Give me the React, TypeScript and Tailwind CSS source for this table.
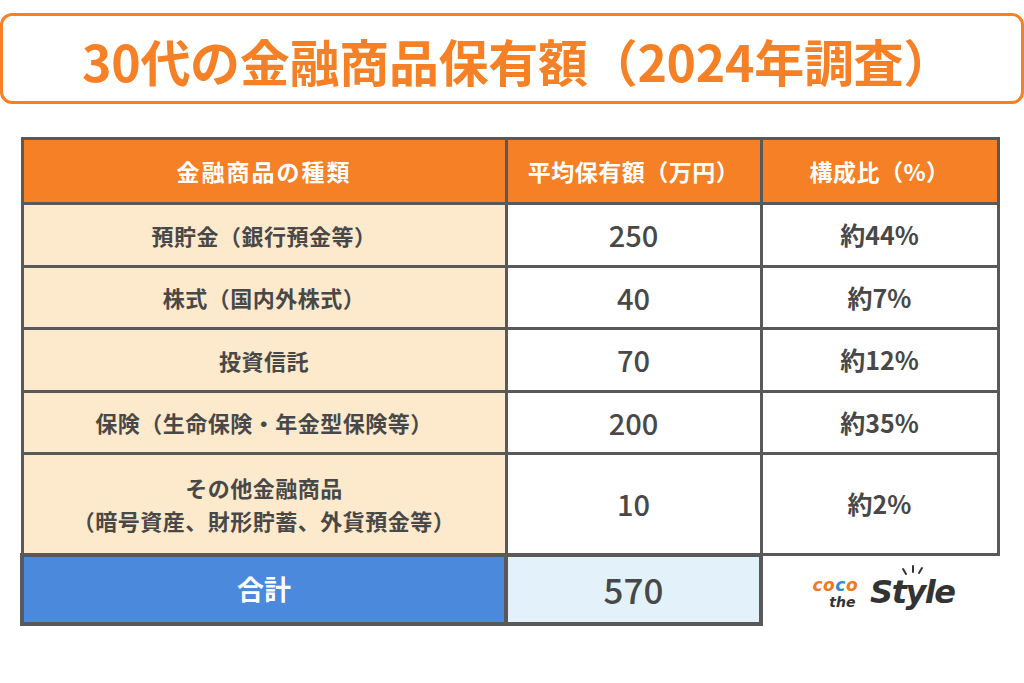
const rows = [
  { name: ["預貯金（銀行預金等）"], amount: "250", ratio: "約44%", h: "h-[63px]" },
  { name: ["株式（国内外株式）"], amount: "40", ratio: "約7%", h: "h-[62px]" },
  { name: ["投資信託"], amount: "70", ratio: "約12%", h: "h-[63px]" },
  { name: ["保険（生命保険・年金型保険等）"], amount: "200", ratio: "約35%", h: "h-[62px]" },
  {
    name: ["その他金融商品", "（暗号資産、財形貯蓄、外貨預金等）"],
    amount: "10",
    ratio: "約2%",
    h: "h-[101px]",
  },
];

function Logo() {
  return (
    <div className="flex items-end gap-[12px] font-['DejaVu_Sans',sans-serif]">
      <div className="flex flex-col items-center">
        <span className="text-[17px] font-bold italic leading-[18px] tracking-[0.5px]">
          <span className="text-[#f07a1c]">co</span>
          <span className="text-[#2f8ad8]">c</span>
          <span className="text-[#f07a1c]">o</span>
        </span>
        <span className="ml-[14px] text-[14px] font-bold italic leading-[16px] text-[#333]">the</span>
      </div>
      <div className="relative">
        <svg
          className="absolute left-[30px] top-[-12px]"
          width="26"
          height="12"
          viewBox="0 0 26 12"
          fill="none"
          stroke="#333"
          strokeWidth="2"
          strokeLinecap="round"
        >
          <path d="M3 5 L6 10" />
          <path d="M13 2 L13 8" />
          <path d="M22 4 L19 9" />
        </svg>
        <span className="text-[32px] font-bold italic leading-none tracking-[-1.5px] text-[#333]">
          Style
        </span>
      </div>
    </div>
  );
}

export default function App() {
  return (
    <div className="w-[1024px] h-[683px] bg-white font-['Noto_Sans_CJK_JP','Noto_Sans',sans-serif] pt-[13px]">
      {/* Title */}
      <div className="h-[91px] border-[3px] border-[#f58025] rounded-[12px] flex items-center pl-[79px] pt-[2px]">
        <h1 className="text-[50px] font-bold text-[#f58025] leading-none tracking-[-0.3px]">
          30代の金融商品保有額（2024年調査）
        </h1>
      </div>

      {/* Table */}
      <table className="mt-[33px] ml-[20px] border-collapse text-center">
        <thead>
          <tr className="h-[65px] bg-[#f58025] text-white text-[23px] font-bold">
            <th className="w-[484px] border-[3px] border-[#595959] tracking-[2px]">金融商品の種類</th>
            <th className="w-[255px] border-[3px] border-[#595959] tracking-[0.5px]">平均保有額（万円）</th>
            <th className="w-[237px] border-[3px] border-[#595959] tracking-[0.5px]">構成比（%）</th>
          </tr>
        </thead>
        <tbody className="text-[#484848]">
          {rows.map((r, i) => (
            <tr key={i} className={r.h}>
              <td className="bg-[#fde9cc] border-[3px] border-[#595959] text-[22px] font-bold leading-[33px] tracking-[0.5px]">
                {r.name.map((line, j) => (
                  <div key={j}>{line}</div>
                ))}
              </td>
              <td className="bg-white border-[3px] border-[#595959] text-[29px] font-medium">
                {r.amount}
              </td>
              <td className="bg-white border-[3px] border-[#595959] text-[25px] font-bold">
                {r.ratio}
              </td>
            </tr>
          ))}
          <tr className="h-[69px]">
            <td className="bg-[#4a89dc] border-4 border-[#595959] text-white text-[27px] font-bold">
              合計
            </td>
            <td className="bg-[#e3f2fa] border-4 border-[#595959] text-[35px] font-medium text-[#484848]">
              570
            </td>
            <td className="bg-white">
              <div className="flex justify-center pt-[6px] pl-[6px]">
                <Logo />
              </div>
            </td>
          </tr>
        </tbody>
      </table>
    </div>
  );
}
